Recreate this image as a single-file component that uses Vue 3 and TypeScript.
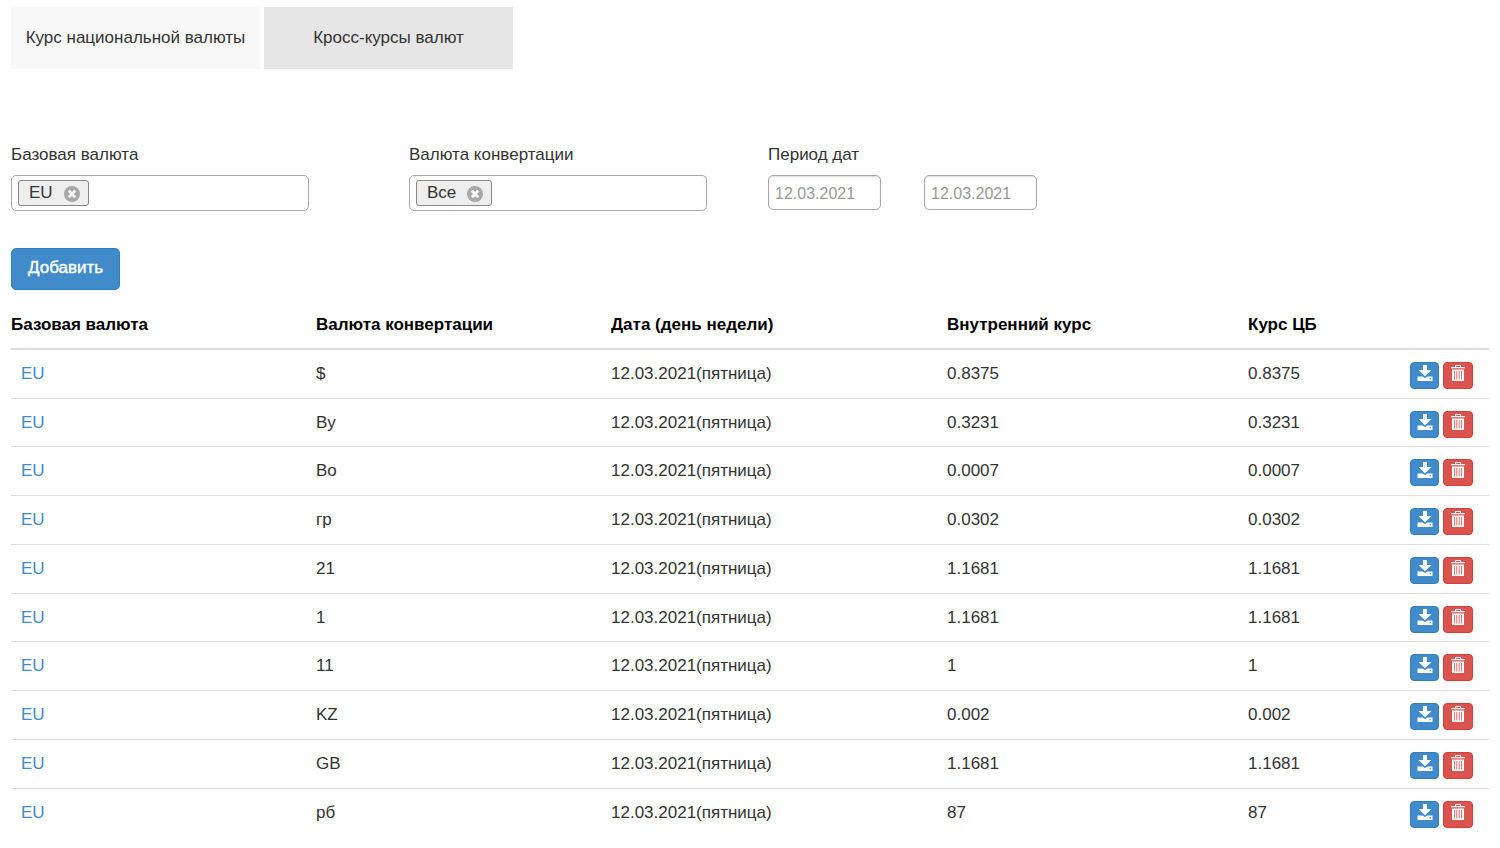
<script setup lang="ts">
import { ref } from 'vue'

interface Rate {
  target: string
  internal: string
  central: string
}

const tabs = ['Курс национальной валюты', 'Кросс-курсы валют']
const activeTab = ref(1)
const base = ref<string[]>(['EU'])
const target = ref<string[]>(['Все'])
const dateFrom = ref('')
const dateTo = ref('')

const rates = ref<Rate[]>([
  { target: '$', internal: '0.8375', central: '0.8375' },
  { target: 'Ву', internal: '0.3231', central: '0.3231' },
  { target: 'Во', internal: '0.0007', central: '0.0007' },
  { target: 'гр', internal: '0.0302', central: '0.0302' },
  { target: '21', internal: '1.1681', central: '1.1681' },
  { target: '1', internal: '1.1681', central: '1.1681' },
  { target: '11', internal: '1', central: '1' },
  { target: 'KZ', internal: '0.002', central: '0.002' },
  { target: 'GB', internal: '1.1681', central: '1.1681' },
  { target: 'рб', internal: '87', central: '87' },
])
</script>

<template>
  <main class="page">
    <nav class="tabs">
      <button
        v-for="(tab, i) in tabs"
        :key="tab"
        type="button"
        class="tab"
        :class="{ active: i === activeTab }"
        @click="activeTab = i"
      >{{ tab }}</button>
    </nav>

    <form class="filters" @submit.prevent>
      <div class="field wide">
        <label for="base">Базовая валюта</label>
        <div class="tokens">
          <span v-for="(t, i) in base" :key="t" class="token">
            {{ t }}
            <button type="button" class="remove" aria-label="Убрать" @click="base.splice(i, 1)">
              <svg viewBox="0 0 16 16"><circle cx="8" cy="8" r="8" fill="#a8a8a8" /><path d="M4.8 4.8l6.4 6.4M11.2 4.8l-6.4 6.4" stroke="#fff" stroke-width="2.8" /></svg>
            </button>
          </span>
          <input id="base" type="text" class="token-input" />
        </div>
      </div>
      <div class="field wide">
        <label for="target">Валюта конвертации</label>
        <div class="tokens">
          <span v-for="(t, i) in target" :key="t" class="token">
            {{ t }}
            <button type="button" class="remove" aria-label="Убрать" @click="target.splice(i, 1)">
              <svg viewBox="0 0 16 16"><circle cx="8" cy="8" r="8" fill="#a8a8a8" /><path d="M4.8 4.8l6.4 6.4M11.2 4.8l-6.4 6.4" stroke="#fff" stroke-width="2.8" /></svg>
            </button>
          </span>
          <input id="target" type="text" class="token-input" />
        </div>
      </div>
      <div class="field">
        <label for="from">Период дат</label>
        <div class="dates">
          <input id="from" v-model="dateFrom" type="text" class="date" placeholder="12.03.2021" />
          <input v-model="dateTo" type="text" class="date" placeholder="12.03.2021" aria-label="Конец периода" />
        </div>
      </div>
    </form>

    <button type="button" class="add">Добавить</button>

    <table class="rates">
      <thead>
        <tr>
          <th class="c-base">Базовая валюта</th>
          <th class="c-target">Валюта конвертации</th>
          <th class="c-date">Дата (день недели)</th>
          <th class="c-internal">Внутренний курс</th>
          <th class="c-central">Курс ЦБ</th>
          <th class="c-actions"></th>
        </tr>
      </thead>
      <tbody>
        <tr v-for="(r, i) in rates" :key="r.target">
          <td class="base"><a href="#">EU</a></td>
          <td>{{ r.target }}</td>
          <td>12.03.2021(пятница)</td>
          <td>{{ r.internal }}</td>
          <td>{{ r.central }}</td>
          <td class="actions-cell">
            <div class="actions">
              <button type="button" class="icon save" aria-label="Скачать">
                <svg viewBox="0 0 16 16" fill="#fff"><path d="M6 0h4v5h4.5L8 11.2 1.5 5H6z" /><path fill-rule="evenodd" d="M.5 11.5h5L8 13l2.5-1.5h5V16H.5zM12.5 13.2v1h1.5v-1z" /></svg>
              </button>
              <button type="button" class="icon delete" aria-label="Удалить" @click="rates.splice(i, 1)">
                <svg viewBox="0 0 16 16" fill="#fff"><path fill-rule="evenodd" d="M5 0h6v2h4v1.3H1V2h4zM6 1v1h4V1z" /><path fill-rule="evenodd" d="M2 4.5h12V16H2zM4 6v8.5h.8V6zM6.4 6v8.5h.8V6zM8.8 6v8.5h.8V6zM11.2 6v8.5h.8V6z" /></svg>
              </button>
            </div>
          </td>
        </tr>
      </tbody>
    </table>
  </main>
</template>

<style>
body {
  margin: 0;
  background: #fff;
}
</style>

<style scoped>
.page {
  padding: 7px 11px 0;
  font: 17px/24px "Liberation Sans", Arial, sans-serif;
  color: #333;
}

button,
input {
  font: inherit;
  box-sizing: border-box;
}

button {
  border: 0;
  padding: 0;
  cursor: pointer;
}

svg {
  display: block;
  width: 16px;
  height: 16px;
}

.tabs {
  display: flex;
  gap: 4px;
}

.tab {
  width: 249px;
  height: 62px;
  background: #f8f8f8;
  color: #333;
  white-space: nowrap;
}

.tab.active {
  background: #e6e6e6;
}

.filters {
  display: flex;
  margin-top: 74px;
}

.field label {
  display: block;
  margin-bottom: 8px;
}

.wide {
  width: 298px;
  margin-right: 100px;
}

.wide + .wide {
  margin-right: 61px;
}

.tokens {
  display: flex;
  box-sizing: border-box;
  height: 36px;
  padding: 4px 6px;
  border: 1px solid #aaa;
  border-radius: 5px;
}

.token {
  display: flex;
  gap: 11px;
  box-sizing: border-box;
  height: 26px;
  padding: 0 8px 0 10px;
  border: 1px solid #888;
  border-radius: 3px;
  background: #eee;
  line-height: 23px;
}

.remove {
  align-self: center;
  margin-top: 1px;
  background: none;
}

.token-input {
  flex: 1;
  min-width: 0;
  border: 0;
  outline: 0;
  background: none;
}

.dates {
  display: flex;
  gap: 43px;
}

.date {
  width: 113px;
  height: 35px;
  padding: 2px 6px 0;
  border: 1px solid #aaa;
  border-radius: 5px;
  font-size: 16px;
  box-shadow: inset 0 1px 2px #ddd;
}

.date::placeholder {
  color: #999;
  opacity: 1;
}

.add {
  display: block;
  height: 42px;
  margin-top: 37px;
  padding: 0 16px 2px;
  border: 1px solid #357ebd;
  border-radius: 5px;
  background: #428bca;
  color: #fff;
  -webkit-text-stroke: 0.4px #fff;
}

.rates {
  width: 100%;
  margin-top: 11px;
  table-layout: fixed;
  border-collapse: separate;
  border-spacing: 0;
  white-space: nowrap;
}

.rates th {
  height: 49px;
  box-sizing: border-box;
  padding: 0;
  border-bottom: 2px solid #ddd;
  color: #000;
  text-align: left;
}

.c-base { width: 305px; }
.c-target { width: 295px; }
.c-date { width: 336px; }
.c-internal { width: 301px; }
.c-central { width: 162px; }
.c-actions { width: 79px; }

.rates td {
  height: 49px;
  box-sizing: border-box;
  padding: 0;
  border-bottom: 1px solid #ddd;
}

.rates tr:nth-child(4n + 2) td {
  height: 48px;
}

.rates tr:last-child td {
  border-bottom: 0;
}

.rates td.base {
  padding-left: 10px;
}

.rates a {
  color: #428bca;
  text-decoration: none;
}

.rates td.actions-cell {
  padding-top: 3px;
}

.actions {
  display: flex;
  gap: 4px;
}

.icon {
  display: flex;
  justify-content: center;
  width: 29px;
  height: 27px;
  padding-top: 2px;
  border: 1px solid #357ebd;
  border-radius: 4px;
  background: #428bca;
}

.icon.delete {
  width: 30px;
  border-color: #d43f3a;
  background: #d9534f;
}
</style>
